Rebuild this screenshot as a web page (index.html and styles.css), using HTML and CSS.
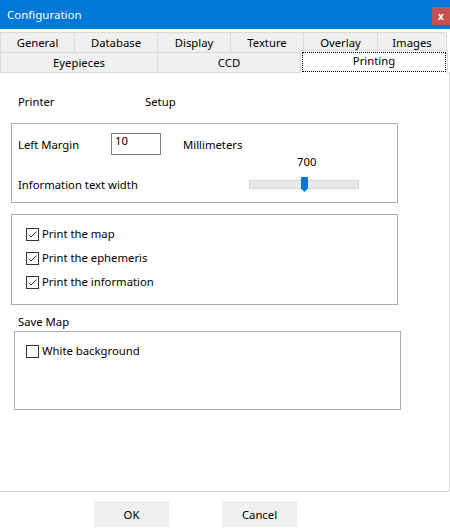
FILE: index.html
```html
<!DOCTYPE html>
<html>
<head>
<meta charset="utf-8">
<link rel="stylesheet" href="styles.css">
</head>
<body>
<div class="titlebar">
  <span class="title">Configuration</span>
  <span class="close">x</span>
</div>
<div class="tabs">
  <div class="tabrow">
    <div class="tab w74">General</div>
    <div class="tab w83">Database</div>
    <div class="tab w73">Display</div>
    <div class="tab w73">Texture</div>
    <div class="tab w74">Overlay</div>
    <div class="tab w70 last">Images</div>
  </div>
  <div class="tabrow row2">
    <div class="tab w157">Eyepieces</div>
    <div class="tab w143">CCD</div>
    <div class="tab selected"><span class="focus">Printing</span></div>
  </div>
</div>
<div class="panel">
  <div class="printer-row">
    <span class="printer-label">Printer</span>
    <span>Setup</span>
  </div>
  <div class="group group1">
    <div class="margin-row">
      <span class="lm-label">Left Margin</span>
      <span class="input">10</span>
      <span class="mm">Millimeters</span>
    </div>
    <div class="value-row"><span class="value">700</span></div>
    <div class="width-row">
      <span class="iw-label">Information text width</span>
      <div class="track">
        <svg class="thumb" width="7" height="15" viewBox="0 0 7 15"><path d="M0 0H7V11.5L3.5 15L0 11.5Z" fill="#0078d7"/></svg>
      </div>
    </div>
  </div>
  <div class="group group2">
    <div class="check-row"><svg class="cb" width="13" height="13" viewBox="0 0 13 13"><rect x="0.5" y="0.5" width="12" height="12" fill="#fff" stroke="#333"/><polyline points="2.5,6.5 5,9 10.5,3.5" fill="none" stroke="#444" stroke-width="1"/></svg><span>Print the map</span></div>
    <div class="check-row"><svg class="cb" width="13" height="13" viewBox="0 0 13 13"><rect x="0.5" y="0.5" width="12" height="12" fill="#fff" stroke="#333"/><polyline points="2.5,6.5 5,9 10.5,3.5" fill="none" stroke="#444" stroke-width="1"/></svg><span>Print the ephemeris</span></div>
    <div class="check-row"><svg class="cb" width="13" height="13" viewBox="0 0 13 13"><rect x="0.5" y="0.5" width="12" height="12" fill="#fff" stroke="#333"/><polyline points="2.5,6.5 5,9 10.5,3.5" fill="none" stroke="#444" stroke-width="1"/></svg><span>Print the information</span></div>
  </div>
  <div class="save-label">Save Map</div>
  <div class="group group3">
    <div class="check-row"><svg class="cb" width="13" height="13" viewBox="0 0 13 13"><rect x="0.5" y="0.5" width="12" height="12" fill="#fff" stroke="#333"/></svg><span>White background</span></div>
  </div>
</div>
<div class="buttons">
  <div class="btn">OK</div>
  <div class="btn">Cancel</div>
</div>
</body>
</html>
```
FILE: styles.css
```css
html, body {
  margin: 0;
  padding: 0;
}
body {
  width: 450px;
  height: 532px;
  overflow: hidden;
  background: #fff;
  font-family: "Noto Sans", "Open Sans", sans-serif;
  font-size: 11.3px;
  color: #000;
}
.titlebar {
  height: 29px;
  background: #0078d7;
  display: flex;
  align-items: flex-start;
}
.title {
  color: #fff;
  padding-left: 7px;
  line-height: 29px;
  font-size: 11.5px;
}
.close {
  margin-left: auto;
  margin-top: 7px;
  width: 18px;
  height: 18px;
  background: #c75050;
  color: #fff;
  font-weight: bold;
  font-size: 10px;
  display: flex;
  align-items: center;
  justify-content: center;
}
.tabs {
  margin-top: 3px;
  width: 448px;
}
.tabrow {
  display: flex;
  height: 20px;
}
.tab {
  box-sizing: border-box;
  height: 20px;
  border-top: 1px solid #d9d9d9;
  border-left: 1px solid #d9d9d9;
  background: #f0f0f0;
  display: flex;
  align-items: center;
  justify-content: center;
}
.tab.last { border-right: 1px solid #d9d9d9; }
.w74 { width: 74px; }
.w83 { width: 83px; }
.w73 { width: 73px; }
.w70 { width: 70px; }
.w157 { width: 157px; }
.w143 { width: 143px; }
.row2 { align-items: flex-start; }
.tab.selected {
  position: relative;
  z-index: 1;
  width: 148px;
  height: 23px;
  margin-top: -2px;
  background: #fff;
  border-right: 1px solid #d9d9d9;
  padding: 1px;
  align-items: stretch;
}
.focus {
  flex: 1;
  height: 20px;
  box-sizing: border-box;
  border: 1px dotted #000;
  padding-bottom: 3px;
  display: flex;
  align-items: center;
  justify-content: center;
}
.panel {
  box-sizing: border-box;
  width: 450px;
  height: 420px;
  border-top: 1px solid #d9d9d9;
  border-right: 1px solid #d9d9d9;
  border-bottom: 1px solid #d9d9d9;
  display: flex;
  flex-direction: column;
}
.printer-row {
  margin-top: 21px;
  padding-left: 18px;
  line-height: 16px;
  display: flex;
}
.printer-label { width: 127px; }
.group {
  box-sizing: border-box;
  border: 1px solid #adadad;
  width: 387px;
}
.group1 {
  margin-top: 13px;
  margin-left: 11px;
  height: 80px;
  padding: 9px 0 0 6px;
}
.margin-row {
  display: flex;
  align-items: center;
  height: 22px;
}
.lm-label { width: 93px; }
.input {
  box-sizing: border-box;
  width: 50px;
  height: 22px;
  border: 1px solid #7a7a7a;
  padding: 0 0 0 3px;
  line-height: 14px;
}
.mm { margin-left: 22px; }
.value-row {
  height: 13px;
  line-height: 13px;
  padding-left: 279px;
}
.width-row {
  margin-top: 9px;
  height: 15px;
  display: flex;
  align-items: center;
}
.iw-label { width: 231px; padding-bottom: 1px; }
.track {
  position: relative;
  box-sizing: border-box;
  width: 110px;
  height: 9px;
  background: #e7eaea;
  border: 1px solid #d6d6d6;
}
.thumb {
  position: absolute;
  left: 51px;
  top: -4px;
}
.group2 {
  margin-top: 11px;
  margin-left: 11px;
  height: 91px;
  padding: 7px 0 0 14px;
}
.check-row {
  height: 24px;
  display: flex;
  align-items: center;
}
.check-row span { padding-bottom: 1px; }
.cb { margin-right: 3px; flex: none; }
.save-label {
  margin-top: 9px;
  padding-left: 18px;
  line-height: 16px;
  margin-bottom: 1px;
}
.group3 {
  margin-left: 14px;
  height: 79px;
  padding: 7px 0 0 11px;
}
.buttons {
  display: flex;
  gap: 53px;
  margin-top: 9px;
  padding-left: 94px;
}
.btn {
  width: 75px;
  height: 26px;
  background: #efefef;
  display: flex;
  align-items: center;
  justify-content: center;
}
```
